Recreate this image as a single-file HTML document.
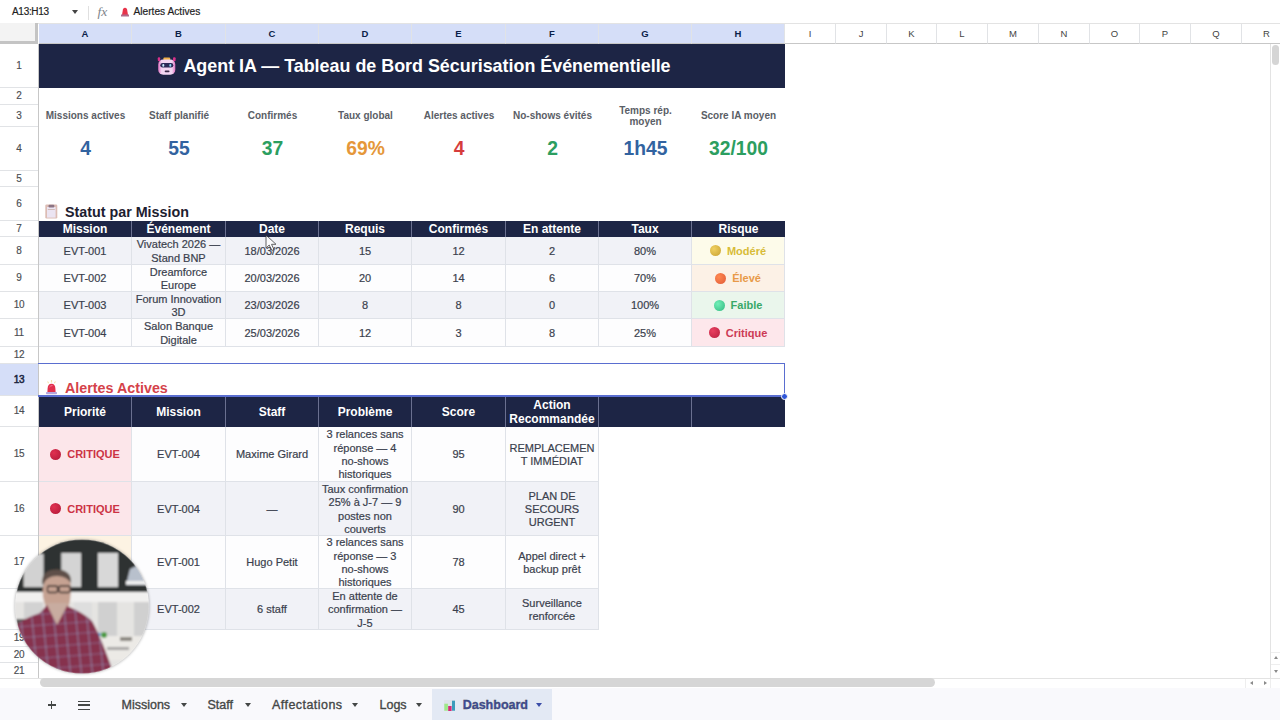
<!DOCTYPE html><html><head><meta charset="utf-8"><style>
*{margin:0;padding:0;box-sizing:border-box}
html,body{width:1280px;height:720px;overflow:hidden;background:#fff;font-family:"Liberation Sans",sans-serif}
.a{position:absolute}
.c{position:absolute;display:flex;align-items:center;justify-content:center;text-align:center;overflow:hidden}
.rh{position:absolute;left:0;width:38px;display:flex;align-items:center;justify-content:center;font-size:10px;letter-spacing:-0.2px;color:#4a4d52;-webkit-text-stroke:0.15px #4a4d52;border-bottom:1px solid #e1e3e6;padding-bottom:1px}
.ch{position:absolute;top:23px;height:21px;display:flex;align-items:center;justify-content:center;font-size:9.5px;color:#444;border-right:1px solid #e1e3e6;border-bottom:1px solid #c7c7c7}
.t{font-size:11px;color:#3a3f4d;line-height:13.3px;-webkit-text-stroke:0.2px #3a3f4d}
.h{font-size:12px;color:#fff;font-weight:bold}
.lbl{font-size:10px;font-weight:bold;color:#5a5e66;line-height:11px}
.val{font-size:19.3px;font-weight:bold}
.tab{position:absolute;top:689px;height:31px;display:flex;align-items:center;font-size:12.5px;color:#444746;-webkit-text-stroke:0.35px #444746}
.arr{width:0;height:0;border-left:3.5px solid transparent;border-right:3.5px solid transparent;border-top:4px solid #444746;display:inline-block}
</style></head><body>

<div class="a" style="left:0;top:0;width:1280px;height:23px;background:#fff"></div>
<div class="a" style="left:12px;top:6px;font-size:10px;letter-spacing:-0.3px;color:#1f1f1f;line-height:12px;-webkit-text-stroke:0.2px #1f1f1f">A13:H13</div>
<div class="a arr" style="left:72px;top:9.5px;border-top-color:#444"></div>
<div class="a" style="left:88px;top:6px;width:1px;height:14px;background:#e0e0e0"></div>
<div class="a" style="left:97.5px;top:3.5px;font-size:13.5px;color:#80868b;font-style:italic;font-family:'Liberation Serif',serif;line-height:15px">fx</div>
<svg class="a" style="left:119.5px;top:5px" width="10" height="12" viewBox="0 0 10 12"><path d="M2 10 L3 4 Q5 1.5 7 4 L8 10 Z" fill="#e8334a"/><rect x="1" y="9.5" width="8" height="2" fill="#b06b8a"/></svg>
<div class="a" style="left:133.5px;top:6px;font-size:10.2px;color:#1f1f1f;line-height:12px;-webkit-text-stroke:0.2px #1f1f1f">Alertes Actives</div>
<div class="a" style="left:0;top:23px;width:38px;height:21px;background:#f3f3f3;border-right:3px solid #c4c4c4;border-bottom:3px solid #c4c4c4"></div>
<div class="ch" style="left:39px;width:93px;background:#d5def8;color:#0b1f4a;font-weight:bold">A</div>
<div class="ch" style="left:132px;width:94px;background:#d5def8;color:#0b1f4a;font-weight:bold">B</div>
<div class="ch" style="left:226px;width:93px;background:#d5def8;color:#0b1f4a;font-weight:bold">C</div>
<div class="ch" style="left:319px;width:93px;background:#d5def8;color:#0b1f4a;font-weight:bold">D</div>
<div class="ch" style="left:412px;width:94px;background:#d5def8;color:#0b1f4a;font-weight:bold">E</div>
<div class="ch" style="left:506px;width:93px;background:#d5def8;color:#0b1f4a;font-weight:bold">F</div>
<div class="ch" style="left:599px;width:93px;background:#d5def8;color:#0b1f4a;font-weight:bold">G</div>
<div class="ch" style="left:692px;width:93px;background:#d5def8;color:#0b1f4a;font-weight:bold">H</div>
<div class="ch" style="left:785px;width:51px;background:#fff">I</div>
<div class="ch" style="left:836px;width:51px;background:#fff">J</div>
<div class="ch" style="left:887px;width:50px;background:#fff">K</div>
<div class="ch" style="left:937px;width:51px;background:#fff">L</div>
<div class="ch" style="left:988px;width:51px;background:#fff">M</div>
<div class="ch" style="left:1039px;width:51px;background:#fff">N</div>
<div class="ch" style="left:1090px;width:50px;background:#fff">O</div>
<div class="ch" style="left:1140px;width:51px;background:#fff">P</div>
<div class="ch" style="left:1191px;width:51px;background:#fff">Q</div>
<div class="ch" style="left:1242px;width:50px;background:#fff">R</div>
<div class="a" style="left:38px;top:23px;width:1242px;height:1px;background:#e3e3e3"></div>
<div class="rh" style="top:44px;height:44px;background:#fff;">1</div>
<div class="rh" style="top:88px;height:17px;background:#fff;">2</div>
<div class="rh" style="top:105px;height:22px;background:#fff;">3</div>
<div class="rh" style="top:127px;height:44px;background:#fff;">4</div>
<div class="rh" style="top:171px;height:16px;background:#fff;">5</div>
<div class="rh" style="top:187px;height:34px;background:#fff;">6</div>
<div class="rh" style="top:221px;height:16px;background:#fff;">7</div>
<div class="rh" style="top:237px;height:28px;background:#fff;">8</div>
<div class="rh" style="top:265px;height:27px;background:#fff;">9</div>
<div class="rh" style="top:292px;height:27px;background:#fff;">10</div>
<div class="rh" style="top:319px;height:28px;background:#fff;">11</div>
<div class="rh" style="top:347px;height:17px;background:#fff;">12</div>
<div class="rh" style="top:364px;height:32px;background:#d5def8;color:#1a2440;-webkit-text-stroke:0.5px #1a2440;">13</div>
<div class="rh" style="top:396px;height:31px;background:#fff;">14</div>
<div class="rh" style="top:427px;height:55px;background:#fff;">15</div>
<div class="rh" style="top:482px;height:54px;background:#fff;">16</div>
<div class="rh" style="top:536px;height:53px;background:#fff;">17</div>
<div class="rh" style="top:589px;height:41px;background:#fff;"></div>
<div class="rh" style="top:630px;height:17px;background:#fff;">19</div>
<div class="rh" style="top:647px;height:16px;background:#fff;">20</div>
<div class="rh" style="top:663px;height:16px;background:#fff;">21</div>
<div class="a" style="left:38px;top:44px;width:1px;height:634px;background:#c7c7c7"></div>
<div class="c" style="left:39px;top:44px;width:746px;height:44px;background:#1d2545"><svg width="21" height="19" viewBox="0 0 21 19" style="margin-right:7px;margin-left:2px;flex:none;position:relative;left:1px"><defs><linearGradient id="hg" x1="0" x2="1" y1="0" y2="0"><stop offset="0" stop-color="#e070c0"/><stop offset="0.2" stop-color="#f2d6f2"/><stop offset="0.8" stop-color="#f2d6f2"/><stop offset="1" stop-color="#e070c0"/></linearGradient></defs><rect x="1.8" y="0.3" width="2.4" height="4" rx="1" fill="#d8308a"/><rect x="17" y="0.3" width="2.6" height="4" rx="1" fill="#d8308a"/><rect x="7.4" y="0.6" width="6.8" height="2.8" rx="1" fill="#f0b048"/><rect x="2.2" y="2.6" width="17.1" height="15.2" rx="5" fill="url(#hg)"/><rect x="4.3" y="6" width="13" height="4.5" rx="2.2" fill="#2c2a58"/><rect x="6.3" y="7" width="2" height="2.8" rx="1" fill="#c8ecff"/><rect x="13.3" y="7" width="2" height="2.8" rx="1" fill="#8ad8f0"/><rect x="8.7" y="13.6" width="4.8" height="1.7" rx="0.8" fill="#3a2a48"/></svg><span style="font-size:17.9px;font-weight:bold;color:#fff;white-space:nowrap">Agent IA — Tableau de Bord Sécurisation Événementielle</span></div>
<div class="c" style="left:39px;top:105px;width:93px;height:22px;padding-bottom:2px"><span class="lbl">Missions actives</span></div>
<div class="c" style="left:39px;top:127px;width:93px;height:44px;"><span class="val" style="color:#3263a0">4</span></div>
<div class="c" style="left:132px;top:105px;width:94px;height:22px;padding-bottom:2px"><span class="lbl">Staff planifié</span></div>
<div class="c" style="left:132px;top:127px;width:94px;height:44px;"><span class="val" style="color:#3263a0">55</span></div>
<div class="c" style="left:226px;top:105px;width:93px;height:22px;padding-bottom:2px"><span class="lbl">Confirmés</span></div>
<div class="c" style="left:226px;top:127px;width:93px;height:44px;"><span class="val" style="color:#2c9e60">37</span></div>
<div class="c" style="left:319px;top:105px;width:93px;height:22px;padding-bottom:2px"><span class="lbl">Taux global</span></div>
<div class="c" style="left:319px;top:127px;width:93px;height:44px;"><span class="val" style="color:#e5973a">69%</span></div>
<div class="c" style="left:412px;top:105px;width:94px;height:22px;padding-bottom:2px"><span class="lbl">Alertes actives</span></div>
<div class="c" style="left:412px;top:127px;width:94px;height:44px;"><span class="val" style="color:#d63c3c">4</span></div>
<div class="c" style="left:506px;top:105px;width:93px;height:22px;padding-bottom:2px"><span class="lbl">No-shows évités</span></div>
<div class="c" style="left:506px;top:127px;width:93px;height:44px;"><span class="val" style="color:#2c9e60">2</span></div>
<div class="c" style="left:599px;top:105px;width:93px;height:22px;padding-bottom:2px"><span class="lbl"><span style="display:inline-block;line-height:11.5px;padding-top:2px">Temps rép.<br>moyen</span></span></div>
<div class="c" style="left:599px;top:127px;width:93px;height:44px;"><span class="val" style="color:#3263a0">1h45</span></div>
<div class="c" style="left:692px;top:105px;width:93px;height:22px;padding-bottom:2px"><span class="lbl">Score IA moyen</span></div>
<div class="c" style="left:692px;top:127px;width:93px;height:44px;"><span class="val" style="color:#2c9e60">32/100</span></div>
<div class="a" style="left:45px;top:203px;display:flex;align-items:center;height:17px"><svg width="13" height="15" viewBox="0 0 13 15" style="margin-right:7px;flex:none"><rect x="0.3" y="0.5" width="12" height="14" rx="1.2" fill="#dcbcb4"/><rect x="2" y="3" width="8.6" height="10.6" fill="#ebe4f2"/><rect x="3.5" y="0.8" width="5.8" height="2.8" rx="1" fill="#8c7484"/><rect x="2.8" y="5" width="7" height="0.8" fill="#c8b0a8"/></svg><span style="font-size:14.3px;font-weight:bold;color:#1d2030">Statut par Mission</span></div>
<div class="c" style="left:39px;top:221px;width:93px;height:16px;background:#1d2545;border-right:1px solid #6a7090;"><span class="h">Mission</span></div>
<div class="c" style="left:132px;top:221px;width:94px;height:16px;background:#1d2545;border-right:1px solid #6a7090;"><span class="h">Événement</span></div>
<div class="c" style="left:226px;top:221px;width:93px;height:16px;background:#1d2545;border-right:1px solid #6a7090;"><span class="h">Date</span></div>
<div class="c" style="left:319px;top:221px;width:93px;height:16px;background:#1d2545;border-right:1px solid #6a7090;"><span class="h">Requis</span></div>
<div class="c" style="left:412px;top:221px;width:94px;height:16px;background:#1d2545;border-right:1px solid #6a7090;"><span class="h">Confirmés</span></div>
<div class="c" style="left:506px;top:221px;width:93px;height:16px;background:#1d2545;border-right:1px solid #6a7090;"><span class="h">En attente</span></div>
<div class="c" style="left:599px;top:221px;width:93px;height:16px;background:#1d2545;border-right:1px solid #6a7090;"><span class="h">Taux</span></div>
<div class="c" style="left:692px;top:221px;width:93px;height:16px;background:#1d2545;"><span class="h">Risque</span></div>
<div class="c" style="left:39px;top:237px;width:93px;height:28px;background:#f1f2f7;border-right:1px solid #dfe2e8;border-bottom:1px solid #dfe2e8;padding-top:2px"><span class="t">EVT-001</span></div>
<div class="c" style="left:132px;top:237px;width:94px;height:28px;background:#f1f2f7;border-right:1px solid #dfe2e8;border-bottom:1px solid #dfe2e8;padding-top:2px"><span class="t">Vivatech 2026 —<br>Stand BNP</span></div>
<div class="c" style="left:226px;top:237px;width:93px;height:28px;background:#f1f2f7;border-right:1px solid #dfe2e8;border-bottom:1px solid #dfe2e8;padding-top:2px"><span class="t">18/03/2026</span></div>
<div class="c" style="left:319px;top:237px;width:93px;height:28px;background:#f1f2f7;border-right:1px solid #dfe2e8;border-bottom:1px solid #dfe2e8;padding-top:2px"><span class="t">15</span></div>
<div class="c" style="left:412px;top:237px;width:94px;height:28px;background:#f1f2f7;border-right:1px solid #dfe2e8;border-bottom:1px solid #dfe2e8;padding-top:2px"><span class="t">12</span></div>
<div class="c" style="left:506px;top:237px;width:93px;height:28px;background:#f1f2f7;border-right:1px solid #dfe2e8;border-bottom:1px solid #dfe2e8;padding-top:2px"><span class="t">2</span></div>
<div class="c" style="left:599px;top:237px;width:93px;height:28px;background:#f1f2f7;border-right:1px solid #dfe2e8;border-bottom:1px solid #dfe2e8;padding-top:2px"><span class="t">80%</span></div>
<div class="c" style="left:692px;top:237px;width:93px;height:28px;background:#fdfbea;border-right:1px solid #dfe2e8;border-bottom:1px solid #dfe2e8"><span style="width:11px;height:11px;border-radius:50%;background:radial-gradient(circle at 35% 35%,#f0d060,#c8a030);margin-right:6px;flex:none"></span><span style="font-size:11px;font-weight:bold;color:#d8bc38">Modéré</span></div>
<div class="c" style="left:39px;top:265px;width:93px;height:27px;background:#fdfdfe;border-right:1px solid #dfe2e8;border-bottom:1px solid #dfe2e8;padding-top:2px"><span class="t">EVT-002</span></div>
<div class="c" style="left:132px;top:265px;width:94px;height:27px;background:#fdfdfe;border-right:1px solid #dfe2e8;border-bottom:1px solid #dfe2e8;padding-top:2px"><span class="t">Dreamforce<br>Europe</span></div>
<div class="c" style="left:226px;top:265px;width:93px;height:27px;background:#fdfdfe;border-right:1px solid #dfe2e8;border-bottom:1px solid #dfe2e8;padding-top:2px"><span class="t">20/03/2026</span></div>
<div class="c" style="left:319px;top:265px;width:93px;height:27px;background:#fdfdfe;border-right:1px solid #dfe2e8;border-bottom:1px solid #dfe2e8;padding-top:2px"><span class="t">20</span></div>
<div class="c" style="left:412px;top:265px;width:94px;height:27px;background:#fdfdfe;border-right:1px solid #dfe2e8;border-bottom:1px solid #dfe2e8;padding-top:2px"><span class="t">14</span></div>
<div class="c" style="left:506px;top:265px;width:93px;height:27px;background:#fdfdfe;border-right:1px solid #dfe2e8;border-bottom:1px solid #dfe2e8;padding-top:2px"><span class="t">6</span></div>
<div class="c" style="left:599px;top:265px;width:93px;height:27px;background:#fdfdfe;border-right:1px solid #dfe2e8;border-bottom:1px solid #dfe2e8;padding-top:2px"><span class="t">70%</span></div>
<div class="c" style="left:692px;top:265px;width:93px;height:27px;background:#fcf1e6;border-right:1px solid #dfe2e8;border-bottom:1px solid #dfe2e8"><span style="width:11px;height:11px;border-radius:50%;background:radial-gradient(circle at 35% 35%,#ff8850,#e05a38);margin-right:6px;flex:none"></span><span style="font-size:11px;font-weight:bold;color:#e89a48">Élevé</span></div>
<div class="c" style="left:39px;top:292px;width:93px;height:27px;background:#f1f2f7;border-right:1px solid #dfe2e8;border-bottom:1px solid #dfe2e8;padding-top:2px"><span class="t">EVT-003</span></div>
<div class="c" style="left:132px;top:292px;width:94px;height:27px;background:#f1f2f7;border-right:1px solid #dfe2e8;border-bottom:1px solid #dfe2e8;padding-top:2px"><span class="t">Forum Innovation<br>3D</span></div>
<div class="c" style="left:226px;top:292px;width:93px;height:27px;background:#f1f2f7;border-right:1px solid #dfe2e8;border-bottom:1px solid #dfe2e8;padding-top:2px"><span class="t">23/03/2026</span></div>
<div class="c" style="left:319px;top:292px;width:93px;height:27px;background:#f1f2f7;border-right:1px solid #dfe2e8;border-bottom:1px solid #dfe2e8;padding-top:2px"><span class="t">8</span></div>
<div class="c" style="left:412px;top:292px;width:94px;height:27px;background:#f1f2f7;border-right:1px solid #dfe2e8;border-bottom:1px solid #dfe2e8;padding-top:2px"><span class="t">8</span></div>
<div class="c" style="left:506px;top:292px;width:93px;height:27px;background:#f1f2f7;border-right:1px solid #dfe2e8;border-bottom:1px solid #dfe2e8;padding-top:2px"><span class="t">0</span></div>
<div class="c" style="left:599px;top:292px;width:93px;height:27px;background:#f1f2f7;border-right:1px solid #dfe2e8;border-bottom:1px solid #dfe2e8;padding-top:2px"><span class="t">100%</span></div>
<div class="c" style="left:692px;top:292px;width:93px;height:27px;background:#eaf6ec;border-right:1px solid #dfe2e8;border-bottom:1px solid #dfe2e8"><span style="width:11px;height:11px;border-radius:50%;background:radial-gradient(circle at 35% 35%,#70f0b8,#30b880);margin-right:6px;flex:none"></span><span style="font-size:11px;font-weight:bold;color:#38a868">Faible</span></div>
<div class="c" style="left:39px;top:319px;width:93px;height:28px;background:#fdfdfe;border-right:1px solid #dfe2e8;border-bottom:1px solid #dfe2e8;padding-top:2px"><span class="t">EVT-004</span></div>
<div class="c" style="left:132px;top:319px;width:94px;height:28px;background:#fdfdfe;border-right:1px solid #dfe2e8;border-bottom:1px solid #dfe2e8;padding-top:2px"><span class="t">Salon Banque<br>Digitale</span></div>
<div class="c" style="left:226px;top:319px;width:93px;height:28px;background:#fdfdfe;border-right:1px solid #dfe2e8;border-bottom:1px solid #dfe2e8;padding-top:2px"><span class="t">25/03/2026</span></div>
<div class="c" style="left:319px;top:319px;width:93px;height:28px;background:#fdfdfe;border-right:1px solid #dfe2e8;border-bottom:1px solid #dfe2e8;padding-top:2px"><span class="t">12</span></div>
<div class="c" style="left:412px;top:319px;width:94px;height:28px;background:#fdfdfe;border-right:1px solid #dfe2e8;border-bottom:1px solid #dfe2e8;padding-top:2px"><span class="t">3</span></div>
<div class="c" style="left:506px;top:319px;width:93px;height:28px;background:#fdfdfe;border-right:1px solid #dfe2e8;border-bottom:1px solid #dfe2e8;padding-top:2px"><span class="t">8</span></div>
<div class="c" style="left:599px;top:319px;width:93px;height:28px;background:#fdfdfe;border-right:1px solid #dfe2e8;border-bottom:1px solid #dfe2e8;padding-top:2px"><span class="t">25%</span></div>
<div class="c" style="left:692px;top:319px;width:93px;height:28px;background:#fde7eb;border-right:1px solid #dfe2e8;border-bottom:1px solid #dfe2e8"><span style="width:11px;height:11px;border-radius:50%;background:radial-gradient(circle at 35% 35%,#e84060,#b82040);margin-right:6px;flex:none"></span><span style="font-size:11px;font-weight:bold;color:#cc3a55">Critique</span></div>
<svg class="a" style="left:45px;top:379px" width="12" height="16" viewBox="0 0 12 16"><path d="M6.5 1 V3.5 M2.5 2.5 L3.8 4.3 M10.5 2.5 L9.2 4.3" stroke="#f3e6b0" stroke-width="1.1"/><path d="M2.4 13.2 L2.6 9.5 Q2.8 5 6.5 4.8 Q10.2 5 10.4 9.5 L10.6 13.2 Z" fill="#e2304c"/><path d="M4.5 8 Q5.5 6.5 7.5 6.6" stroke="#f27a9a" stroke-width="1" fill="none"/><rect x="1" y="13" width="11" height="2.2" rx="0.8" fill="#b4a6dc"/></svg>
<div class="a" style="left:65px;top:379px;height:17px;display:flex;align-items:flex-end"><span style="font-size:14.3px;font-weight:bold;color:#d5424a;line-height:16px">Alertes Actives</span></div>
<div class="c" style="left:39px;top:396px;width:93px;height:31px;background:#1d2545;border-right:1px solid #6a7090;"><span class="h" style="line-height:14px">Priorité</span></div>
<div class="c" style="left:132px;top:396px;width:94px;height:31px;background:#1d2545;border-right:1px solid #6a7090;"><span class="h" style="line-height:14px">Mission</span></div>
<div class="c" style="left:226px;top:396px;width:93px;height:31px;background:#1d2545;border-right:1px solid #6a7090;"><span class="h" style="line-height:14px">Staff</span></div>
<div class="c" style="left:319px;top:396px;width:93px;height:31px;background:#1d2545;border-right:1px solid #6a7090;"><span class="h" style="line-height:14px">Problème</span></div>
<div class="c" style="left:412px;top:396px;width:94px;height:31px;background:#1d2545;border-right:1px solid #6a7090;"><span class="h" style="line-height:14px">Score</span></div>
<div class="c" style="left:506px;top:396px;width:93px;height:31px;background:#1d2545;border-right:1px solid #6a7090;"><span class="h" style="line-height:14px">Action<br>Recommandée</span></div>
<div class="c" style="left:599px;top:396px;width:93px;height:31px;background:#1d2545;border-right:1px solid #6a7090;"><span class="h" style="line-height:14px"></span></div>
<div class="c" style="left:692px;top:396px;width:93px;height:31px;background:#1d2545;"><span class="h" style="line-height:14px"></span></div>
<div class="c" style="left:39px;top:427px;width:93px;height:55px;background:#fce6ea;border-right:1px solid #dfe2e8;border-bottom:1px solid #dfe2e8"><span style="width:11px;height:11px;border-radius:50%;background:radial-gradient(circle at 35% 35%,#e03050,#b01838);margin-right:6px;flex:none"></span><span style="font-size:11px;font-weight:bold;color:#cc3344">CRITIQUE</span></div>
<div class="c" style="left:132px;top:427px;width:94px;height:55px;background:#fdfdfe;border-right:1px solid #dfe2e8;border-bottom:1px solid #dfe2e8;padding-top:2px"><span class="t">EVT-004</span></div>
<div class="c" style="left:226px;top:427px;width:93px;height:55px;background:#fdfdfe;border-right:1px solid #dfe2e8;border-bottom:1px solid #dfe2e8;padding-top:2px"><span class="t">Maxime Girard</span></div>
<div class="c" style="left:319px;top:427px;width:93px;height:55px;background:#fdfdfe;border-right:1px solid #dfe2e8;border-bottom:1px solid #dfe2e8;padding-top:2px"><span class="t">3 relances sans<br>réponse — 4<br>no-shows<br>historiques</span></div>
<div class="c" style="left:412px;top:427px;width:94px;height:55px;background:#fdfdfe;border-right:1px solid #dfe2e8;border-bottom:1px solid #dfe2e8;padding-top:2px"><span class="t">95</span></div>
<div class="c" style="left:506px;top:427px;width:93px;height:55px;background:#fdfdfe;border-right:1px solid #dfe2e8;border-bottom:1px solid #dfe2e8;padding-top:2px"><span class="t">REMPLACEMEN<br>T IMMÉDIAT</span></div>
<div class="c" style="left:39px;top:482px;width:93px;height:54px;background:#fce6ea;border-right:1px solid #dfe2e8;border-bottom:1px solid #dfe2e8"><span style="width:11px;height:11px;border-radius:50%;background:radial-gradient(circle at 35% 35%,#e03050,#b01838);margin-right:6px;flex:none"></span><span style="font-size:11px;font-weight:bold;color:#cc3344">CRITIQUE</span></div>
<div class="c" style="left:132px;top:482px;width:94px;height:54px;background:#f1f2f7;border-right:1px solid #dfe2e8;border-bottom:1px solid #dfe2e8;padding-top:2px"><span class="t">EVT-004</span></div>
<div class="c" style="left:226px;top:482px;width:93px;height:54px;background:#f1f2f7;border-right:1px solid #dfe2e8;border-bottom:1px solid #dfe2e8;padding-top:2px"><span class="t">—</span></div>
<div class="c" style="left:319px;top:482px;width:93px;height:54px;background:#f1f2f7;border-right:1px solid #dfe2e8;border-bottom:1px solid #dfe2e8;padding-top:2px"><span class="t">Taux confirmation<br>25% à J-7 — 9<br>postes non<br>couverts</span></div>
<div class="c" style="left:412px;top:482px;width:94px;height:54px;background:#f1f2f7;border-right:1px solid #dfe2e8;border-bottom:1px solid #dfe2e8;padding-top:2px"><span class="t">90</span></div>
<div class="c" style="left:506px;top:482px;width:93px;height:54px;background:#f1f2f7;border-right:1px solid #dfe2e8;border-bottom:1px solid #dfe2e8;padding-top:2px"><span class="t">PLAN DE<br>SECOURS<br>URGENT</span></div>
<div class="c" style="left:39px;top:536px;width:93px;height:53px;background:#fdf3e3;border-right:1px solid #dfe2e8;border-bottom:1px solid #dfe2e8"></div>
<div class="c" style="left:132px;top:536px;width:94px;height:53px;background:#fdfdfe;border-right:1px solid #dfe2e8;border-bottom:1px solid #dfe2e8;padding-top:2px"><span class="t">EVT-001</span></div>
<div class="c" style="left:226px;top:536px;width:93px;height:53px;background:#fdfdfe;border-right:1px solid #dfe2e8;border-bottom:1px solid #dfe2e8;padding-top:2px"><span class="t">Hugo Petit</span></div>
<div class="c" style="left:319px;top:536px;width:93px;height:53px;background:#fdfdfe;border-right:1px solid #dfe2e8;border-bottom:1px solid #dfe2e8;padding-top:2px"><span class="t">3 relances sans<br>réponse — 3<br>no-shows<br>historiques</span></div>
<div class="c" style="left:412px;top:536px;width:94px;height:53px;background:#fdfdfe;border-right:1px solid #dfe2e8;border-bottom:1px solid #dfe2e8;padding-top:2px"><span class="t">78</span></div>
<div class="c" style="left:506px;top:536px;width:93px;height:53px;background:#fdfdfe;border-right:1px solid #dfe2e8;border-bottom:1px solid #dfe2e8;padding-top:2px"><span class="t">Appel direct +<br>backup prêt</span></div>
<div class="c" style="left:39px;top:589px;width:93px;height:41px;background:#fdf3e3;border-right:1px solid #dfe2e8;border-bottom:1px solid #dfe2e8"></div>
<div class="c" style="left:132px;top:589px;width:94px;height:41px;background:#f1f2f7;border-right:1px solid #dfe2e8;border-bottom:1px solid #dfe2e8;padding-top:2px"><span class="t">EVT-002</span></div>
<div class="c" style="left:226px;top:589px;width:93px;height:41px;background:#f1f2f7;border-right:1px solid #dfe2e8;border-bottom:1px solid #dfe2e8;padding-top:2px"><span class="t">6 staff</span></div>
<div class="c" style="left:319px;top:589px;width:93px;height:41px;background:#f1f2f7;border-right:1px solid #dfe2e8;border-bottom:1px solid #dfe2e8;padding-top:2px"><span class="t">En attente de<br>confirmation —<br>J-5</span></div>
<div class="c" style="left:412px;top:589px;width:94px;height:41px;background:#f1f2f7;border-right:1px solid #dfe2e8;border-bottom:1px solid #dfe2e8;padding-top:2px"><span class="t">45</span></div>
<div class="c" style="left:506px;top:589px;width:93px;height:41px;background:#f1f2f7;border-right:1px solid #dfe2e8;border-bottom:1px solid #dfe2e8;padding-top:2px"><span class="t">Surveillance<br>renforcée</span></div>
<div class="a" style="left:38px;top:362.5px;width:747px;height:34px;border:1.6px solid #5a6ed0;border-left:none;border-bottom-width:2px"></div>
<div class="a" style="left:780.5px;top:392.5px;width:7.5px;height:7.5px;border-radius:50%;background:#2e55d8;border:1px solid #fff"></div>
<svg class="a" style="left:265px;top:234px;opacity:0.75" width="14" height="18" viewBox="0 0 14 18"><path d="M1 1 L1 14 L4.2 11 L6.8 16.5 L9 15.5 L6.5 10.3 L11 10.3 Z" fill="#fff" stroke="#333" stroke-width="1" stroke-linejoin="round"/></svg>
<div class="a" style="left:0;top:678px;width:1280px;height:10px;background:#fff;border-top:1px solid #e3e3e3"></div>
<div class="a" style="left:40px;top:678px;width:895px;height:9px;border-radius:4.5px;background:#d6d6d6"></div>
<div class="a" style="left:1245px;top:679px;width:1px;height:9px;background:#eee"></div>
<div class="a" style="left:1249.5px;top:681px;width:0;height:0;border-top:2.5px solid transparent;border-bottom:2.5px solid transparent;border-right:3.5px solid #8a8a8a"></div>
<div class="a" style="left:1264px;top:681px;width:0;height:0;border-top:2.5px solid transparent;border-bottom:2.5px solid transparent;border-left:3.5px solid #8a8a8a"></div>
<div class="a" style="left:1270px;top:679px;width:1px;height:9px;background:#eee"></div>
<div class="a" style="left:1270px;top:44px;width:10px;height:634px;background:#fff;border-left:1px solid #e3e3e3"></div>
<div class="a" style="left:1272px;top:45px;width:7px;height:20px;border-radius:4px;background:#d5d5d5"></div>
<div class="a" style="left:1271px;top:652px;width:9px;height:1px;background:#eee"></div>
<div class="a" style="left:1271px;top:664px;width:9px;height:1px;background:#eee"></div>
<div class="a" style="left:1273.5px;top:656px;width:0;height:0;border-left:2.5px solid transparent;border-right:2.5px solid transparent;border-bottom:3px solid #8a8a8a"></div>
<div class="a" style="left:1273.5px;top:670px;width:0;height:0;border-left:2.5px solid transparent;border-right:2.5px solid transparent;border-top:3px solid #8a8a8a"></div>
<div class="a" style="left:0;top:688px;width:1280px;height:32px;background:#f9f9fc"></div>
<div class="a" style="left:47.5px;top:704px;width:8px;height:1.6px;background:#444746"></div><div class="a" style="left:50.7px;top:700.8px;width:1.6px;height:8px;background:#444746"></div>
<div class="a" style="left:78px;top:700.5px;width:12px;height:9px;border-top:1.5px solid #444746;border-bottom:1.5px solid #444746"></div><div class="a" style="left:78px;top:704.3px;width:12px;height:1.5px;background:#444746"></div>
<div class="tab" style="left:121.5px;">Missions</div>
<div class="a arr" style="left:181px;top:702.5px"></div>
<div class="tab" style="left:207.5px;">Staff</div>
<div class="a arr" style="left:245px;top:702.5px"></div>
<div class="tab" style="left:272px;letter-spacing:0.45px;">Affectations</div>
<div class="a arr" style="left:352px;top:702.5px"></div>
<div class="tab" style="left:379.5px;">Logs</div>
<div class="a arr" style="left:416px;top:702.5px"></div>
<div class="a" style="left:432px;top:689px;width:120px;height:31px;background:#e3e9f4"></div>
<svg class="a" style="left:444px;top:700px" width="11" height="11" viewBox="0 0 11 11"><rect x="0" y="0" width="11" height="11" fill="#dde3ea"/><rect x="0.3" y="3.7" width="3.6" height="7" fill="#9ee888"/><rect x="4.2" y="6" width="3.4" height="5" fill="#d42a78"/><rect x="8" y="0.7" width="3" height="10" fill="#3c9cbc"/></svg>
<div class="tab" style="left:462.7px;color:#3b4da8;font-weight:bold">Dashboard</div>
<div class="a arr" style="left:536px;top:702.5px;border-top-color:#3b4da8"></div>
<svg class="a" style="left:14px;top:539px;filter:drop-shadow(0 0.5px 1.5px rgba(0,0,0,.35))" width="136" height="136" viewBox="0 0 136 136">
<defs><clipPath id="cc"><circle cx="68" cy="67.5" r="67"/></clipPath>
<clipPath id="shirt"><path d="M0 136 L0 88 Q8 80 26 74 L33 66 L43 86 L53 67 Q70 74 78 82 Q88 100 100 136 Z"/></clipPath>
<filter id="bl" x="-5%" y="-5%" width="110%" height="110%"><feGaussianBlur stdDeviation="0.9"/></filter></defs>
<g clip-path="url(#cc)"><g filter="url(#bl)">
<rect x="0" y="0" width="136" height="136" fill="#e5e4e2"/>
<rect x="0" y="0" width="136" height="53" fill="#2f3331"/>
<rect x="9.6" y="15" width="20" height="33" fill="#d2d2d2"/>
<rect x="47.3" y="14" width="19.7" height="34" fill="#d4d4d4"/>
<rect x="84" y="14" width="20" height="34" fill="#d8d8d8"/>
<path d="M116 30 L124 26 L132 40 L132 46 L112 46 Z" fill="#b8c0cc"/>
<rect x="112" y="42" width="24" height="3.5" fill="#f0f0f0"/>
<rect x="0" y="53" width="136" height="10" fill="#f1f0ef"/>
<rect x="10" y="63" width="19" height="24" fill="#d2d2d2"/>
<rect x="84" y="63" width="19" height="34" fill="#d0d0d0"/>
<rect x="120" y="63" width="16" height="34" fill="#d0d0d0"/>
<rect x="60" y="63" width="18" height="30" fill="#dedede"/>
<rect x="80" y="97" width="56" height="24" fill="#eceae6"/>
<rect x="106" y="98" width="12" height="4" fill="#8a8680"/>
<rect x="93" y="108" width="22" height="3" fill="#a8a6a4"/>
<circle cx="90" cy="96" r="3" fill="#4a9a40"/>
<circle cx="85" cy="95.5" r="1.8" fill="#5a9ad0"/>
<rect x="2" y="80" width="10" height="8" fill="#5a5a5a"/>
<path d="M29 58 Q27 36 43 33 Q58 34 57 52 L56 62 Q54 74 43 76 Q32 74 29 58 Z" fill="#c6a292"/>
<path d="M28 46 Q27 30 43 30.5 Q58 31 57 44 Q52 37 43 37 Q33 37 28 46 Z" fill="#5e5048"/>
<rect x="33.5" y="47" width="10" height="6.5" rx="1.5" fill="none" stroke="#2a2222" stroke-width="1.3"/>
<rect x="45" y="47" width="11" height="6.5" rx="1.5" fill="none" stroke="#2a2222" stroke-width="1.3"/>
<path d="M33 64 L34 80 L43 88 L52 80 L53 64 Z" fill="#c8aca0"/>
<path d="M0 136 L0 88 Q8 80 26 74 L33 66 L43 86 L53 67 Q70 74 78 82 Q88 100 100 136 Z" fill="#86304e"/>
<g clip-path="url(#shirt)"><path d="M-6 60 L2 140" stroke="#9aaed0" stroke-width="1.5" opacity="0.45"/><path d="M5 60 L13 140" stroke="#9aaed0" stroke-width="1.5" opacity="0.45"/><path d="M16 60 L24 140" stroke="#9aaed0" stroke-width="1.5" opacity="0.45"/><path d="M27 60 L35 140" stroke="#9aaed0" stroke-width="1.5" opacity="0.45"/><path d="M38 60 L46 140" stroke="#9aaed0" stroke-width="1.5" opacity="0.45"/><path d="M49 60 L57 140" stroke="#9aaed0" stroke-width="1.5" opacity="0.45"/><path d="M60 60 L68 140" stroke="#9aaed0" stroke-width="1.5" opacity="0.45"/><path d="M71 60 L79 140" stroke="#9aaed0" stroke-width="1.5" opacity="0.45"/><path d="M82 60 L90 140" stroke="#9aaed0" stroke-width="1.5" opacity="0.45"/><path d="M93 60 L101 140" stroke="#9aaed0" stroke-width="1.5" opacity="0.45"/><path d="M104 60 L112 140" stroke="#9aaed0" stroke-width="1.5" opacity="0.45"/><path d="M-10 78 L120 68" stroke="#9aaed0" stroke-width="1.3" opacity="0.32"/><path d="M-10 89 L120 79" stroke="#9aaed0" stroke-width="1.3" opacity="0.32"/><path d="M-10 100 L120 90" stroke="#9aaed0" stroke-width="1.3" opacity="0.32"/><path d="M-10 111 L120 101" stroke="#9aaed0" stroke-width="1.3" opacity="0.32"/><path d="M-10 122 L120 112" stroke="#9aaed0" stroke-width="1.3" opacity="0.32"/><path d="M-10 133 L120 123" stroke="#9aaed0" stroke-width="1.3" opacity="0.32"/><path d="M-10 144 L120 134" stroke="#9aaed0" stroke-width="1.3" opacity="0.32"/></g>
</g></g>
<circle cx="68" cy="67.5" r="66.8" fill="none" stroke="rgba(255,255,255,0.35)" stroke-width="0.6"/>
</svg>
</body></html>
